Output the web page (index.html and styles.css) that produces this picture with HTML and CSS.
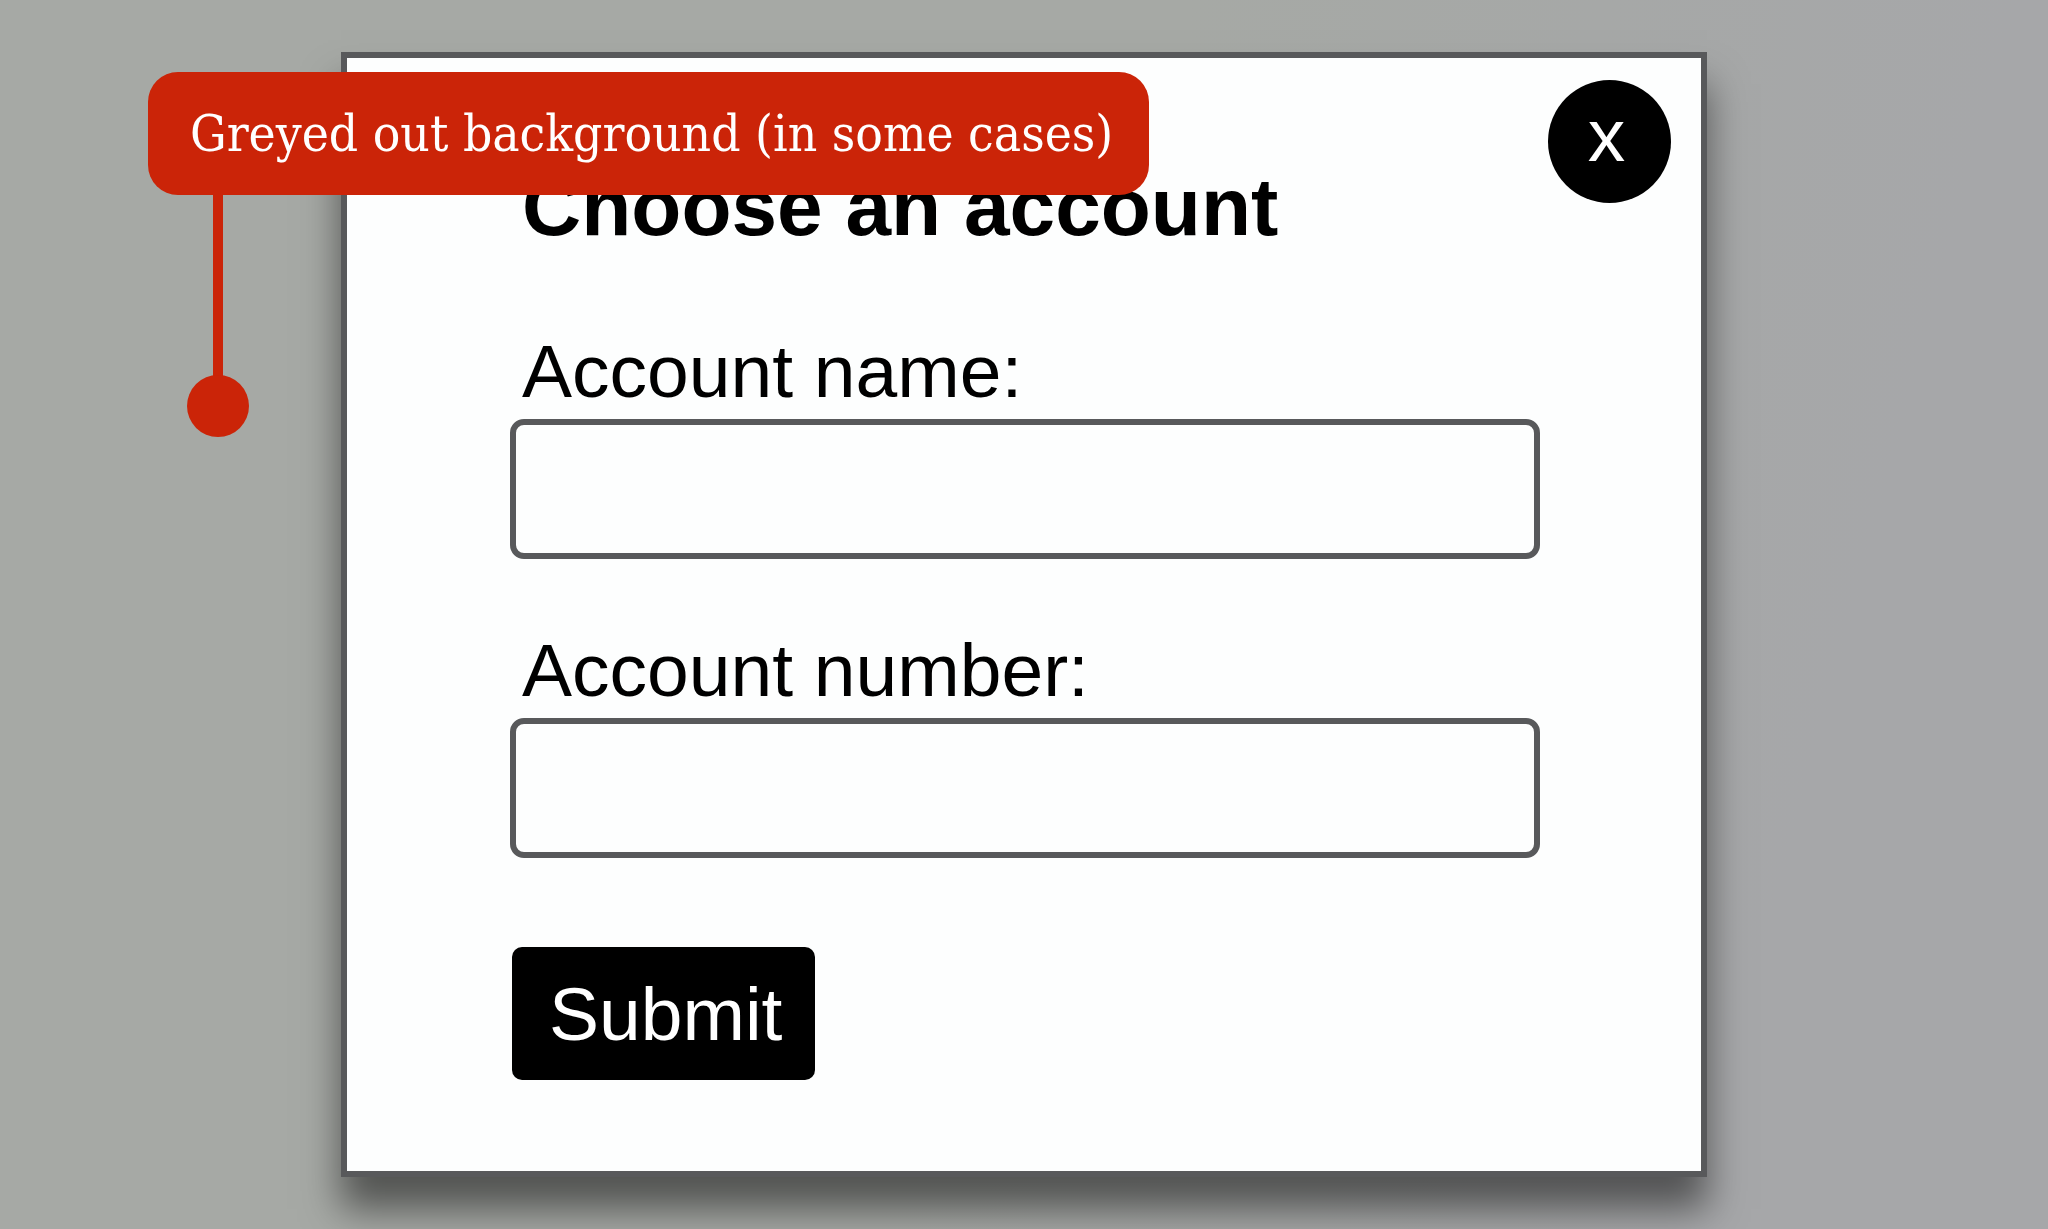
FILE: index.html
```html
<!DOCTYPE html>
<html lang="en">
<head>
    <meta charset="UTF-8">
    <meta name="viewport" content="width=device-width, initial-scale=1.0">
    <title>Choose an account</title>
    <link rel="stylesheet" href="styles.css">
</head>
<body>
    <main class="dialog" role="dialog" aria-labelledby="dialogTitle">
        <button type="button" class="close-btn" aria-label="Close">x</button>

        <h1 id="dialogTitle">Choose an account</h1>

        <form class="account-form">
            <div class="field">
                <label for="accountName">Account name:</label>
                <input type="text" id="accountName" name="accountName">
            </div>

            <div class="field">
                <label for="accountNumber">Account number:</label>
                <input type="text" id="accountNumber" name="accountNumber">
            </div>

            <button type="submit" class="submit-btn">Submit</button>
        </form>
    </main>

    <!-- Note pointing at the backdrop -->
    <aside class="callout">
        <p class="callout-text">Greyed out background (in some cases)</p>
        <svg class="callout-pin" viewBox="0 0 62 243" aria-hidden="true">
            <rect x="26" y="0" width="10" height="190"/>
            <circle cx="31" cy="211" r="31"/>
        </svg>
    </aside>
</body>
</html>
```

FILE: styles.css
```css
* {
    box-sizing: border-box;
}

body {
    margin: 0;
    min-height: 100vh;
    display: flex;
    align-items: center;
    justify-content: center;
    position: relative;
    overflow: hidden;
    font-family: "Liberation Sans", Arial, sans-serif;
    color: #000;
    background: linear-gradient(105deg, #a6a9a5 0%, #a6a9a5 50%, #a6a7a9 85%);
}

.dialog {
    position: relative;
    width: 66.7%;
    padding: 101px 161px 91px 163px;
    background-color: #fdfefe;
    border: 6px solid #58595b;
    box-shadow: 0 32px 36px rgba(0, 0, 0, 0.5);
}

h1 {
    margin: 0 0 72px;
    padding-left: 12px;
    font-size: 82px;
    line-height: 96px;
}

.field {
    display: flex;
    flex-direction: column;
    gap: 4px;
    margin-bottom: 67px;
}

.field:last-of-type {
    margin-bottom: 89px;
}

label {
    padding-left: 12px;
    font-size: 75px;
    line-height: 88px;
}

input[type="text"] {
    width: 100%;
    height: 140px;
    padding: 0 24px;
    font: inherit;
    font-size: 75px;
    background-color: #fdfefe;
    border: 6px solid #58595b;
    border-radius: 14px;
}

button {
    font-family: inherit;
    font-size: 75px;
    color: #fff;
    background-color: #000;
    border: none;
    cursor: pointer;
}

.submit-btn {
    display: block;
    height: 133px;
    margin-left: 2px;
    padding: 0 33px 0 37px;
    border-radius: 10px;
}

.close-btn {
    position: absolute;
    top: 22px;
    right: 30px;
    width: 123px;
    height: 123px;
    padding: 0 6px 14px 0;
    line-height: 88px;
    border-radius: 50%;
}

.callout {
    position: absolute;
    top: 72px;
    left: 148px;
}

.callout-text {
    margin: 0;
    padding: 0 36px 0 42px;
    font-family: "DejaVu Serif Condensed", "DejaVu Serif", serif;
    font-size: 51px;
    line-height: 123px;
    white-space: nowrap;
    color: #fff;
    background-color: #cb2408;
    border-radius: 30px;
}

.callout-pin {
    display: block;
    width: 62px;
    margin-left: 39px;
    fill: #cb2408;
}
```
